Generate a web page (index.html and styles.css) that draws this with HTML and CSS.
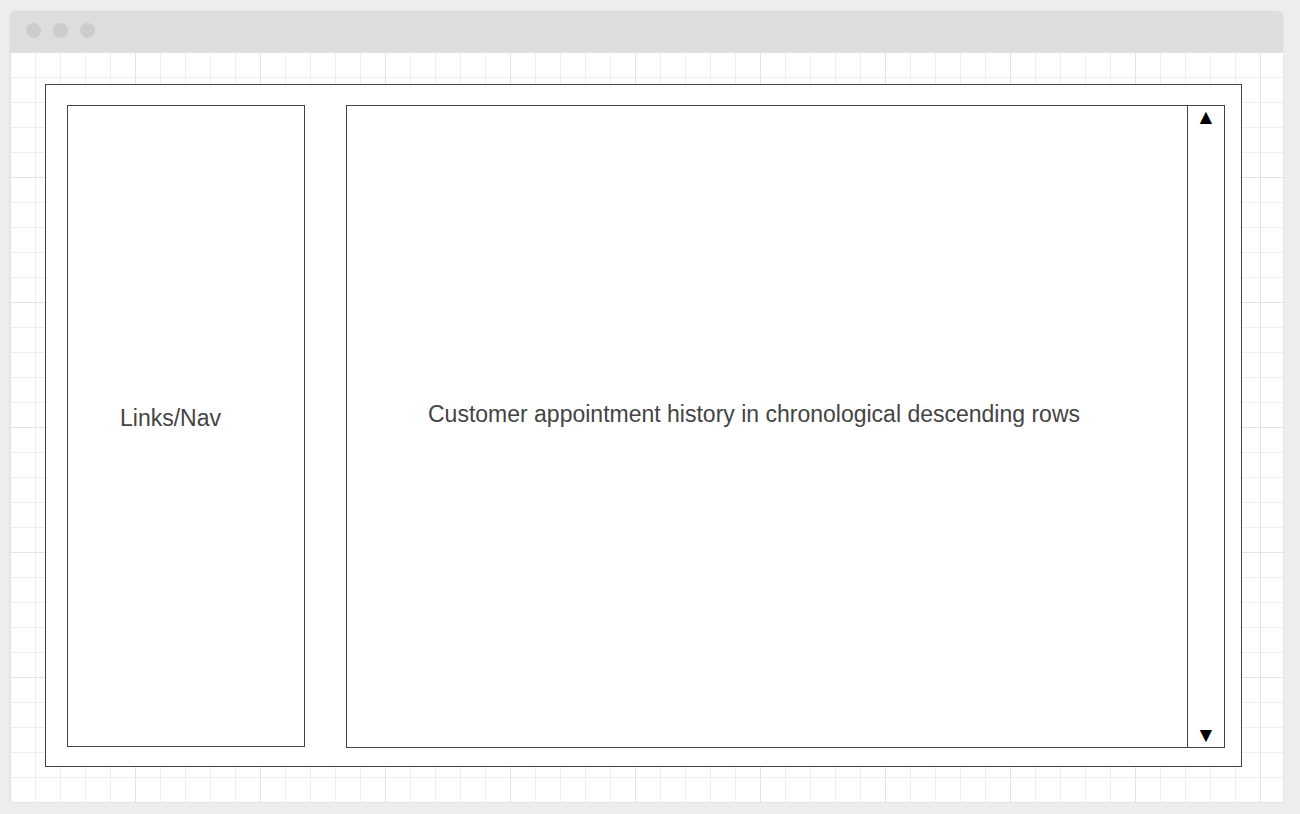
FILE: index.html
```html
<!DOCTYPE html>
<html lang="en">
<head>
  <meta charset="UTF-8" />
  <meta name="viewport" content="width=device-width, initial-scale=1.0"/>
  <title>Appointment History Wireframe</title>
  <link rel="stylesheet" href="styles.css">
</head>
<body>
  <div class="window">
    <!-- browser chrome -->
    <div class="titlebar">
      <span class="dot"></span>
      <span class="dot"></span>
      <span class="dot"></span>
    </div>

    <!-- wireframe canvas -->
    <div class="canvas">
      <div class="frame">
        <div class="nav">
          <span class="label">Links/Nav</span>
        </div>
        <div class="main">
          <div class="content">
            <span class="label">Customer appointment history in chronological descending rows</span>
          </div>
          <div class="scrollbar">
            <span class="arrow">&#9650;</span>
            <span class="arrow">&#9660;</span>
          </div>
        </div>
      </div>
    </div>
  </div>
</body>
</html>
```

FILE: styles.css
```css
/* Wireframe mockup */
body { margin: 0; background: #ededed; font-family: "Liberation Sans", Arial, sans-serif; }

.window { width: 1273px; height: 792px; margin: 11px 0 0 10px; border-radius: 6px 6px 0 0; overflow: hidden; box-shadow: 0 0 2px rgba(0,0,0,0.08); }
.titlebar { height: 41px; box-sizing: border-box; background: #dddddd; display: flex; align-items: center; gap: 12px; padding: 0 0 2px 16px; }
.dot { width: 15px; height: 15px; border-radius: 50%; background: #cccccc; }

.canvas {
  height: 751px;
  box-sizing: border-box;
  padding: 32px 0 0 35px;
  background-color: #fff;
  background-image:
    linear-gradient(to right, #e3e3e3 1px, transparent 1px),
    linear-gradient(to bottom, #e3e3e3 1px, transparent 1px),
    linear-gradient(to right, #efefef 1px, transparent 1px),
    linear-gradient(to bottom, #efefef 1px, transparent 1px);
  background-size: 125px 125px, 125px 125px, 25px 25px, 25px 25px;
  background-position: 0 0, 0 0, 0 0, 0 0;
}

.frame { width: 1197px; height: 683px; box-sizing: border-box; border: 1px solid #444; background: #fff; display: flex; align-items: flex-start; gap: 41px; padding: 20px 0 0 21px; }

.nav { width: 238px; height: 642px; box-sizing: border-box; border: 1px solid #444; padding: 299px 0 0 52px; }
.main { width: 879px; height: 643px; box-sizing: border-box; border: 1px solid #444; display: flex; }
.content { flex: 1; padding: 295px 0 0 81px; }
.scrollbar { width: 36px; border-left: 1px solid #444; display: flex; flex-direction: column; justify-content: space-between; align-items: center; padding: 0 0 1px; }
.arrow { font-size: 21px; line-height: 22px; color: #000; }

.label { font-size: 23px; color: #444; line-height: 26px; }
```
